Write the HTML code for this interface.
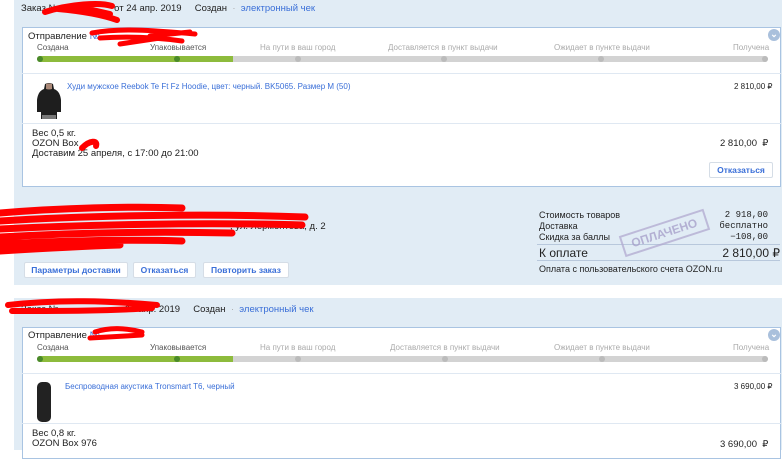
<html><head><style>
body{margin:0;width:782px;height:450px;overflow:hidden;background:#fff;font-family:"Liberation Sans",sans-serif;font-size:9px;color:#222;position:relative}
.a{position:absolute;white-space:nowrap}
.pan{position:absolute;left:14px;width:768px;background:#e1ecf5}
.box{position:absolute;left:22px;width:757px;background:#fff;border:1px solid #a9c4e2}
.lnk{color:#3a6fd8}
.g{color:#aaa}
.bar{position:absolute;height:6px;border-radius:3px;background:#d3d3d3}
.dot{position:absolute;width:6px;height:6px;border-radius:3px}
.sep{position:absolute;left:22px;width:759px;height:1px;background:#dfe8f2}
.btn{position:absolute;top:262px;height:14px;background:#fff;border:1px solid #d5dde6;border-radius:2px;color:#3a6fd8;font-weight:bold;font-size:8.5px;text-align:center;line-height:14px}
.chev{position:absolute;width:12px;height:12px;border-radius:6px;background:#a9c0dc;color:#fff;font-size:9px;text-align:center;line-height:10px;font-weight:bold}
</style></head><body>
<div class="pan" style="top:0;height:285px"></div>
<div class="pan" style="top:298px;height:152px"></div>

<!-- order 1 -->
<div class="a" style="left:21px;top:3px;font-size:9.5px">Заказ №&nbsp;&nbsp;&nbsp;&nbsp;&nbsp;&nbsp;&nbsp;&nbsp;&nbsp;&nbsp;&nbsp;&nbsp;&nbsp;&nbsp;&nbsp;&nbsp;&nbsp;&nbsp;&nbsp;&nbsp;&nbsp;от 24 апр. 2019 &nbsp;&nbsp;&nbsp;&nbsp;Создан &nbsp;<span class="g">·</span> &nbsp;<span class="lnk">электронный чек</span></div>
<div class="box" style="top:27px;height:158px"></div>
<div class="chev" style="left:768px;top:29px">⌄</div>
<div class="a" style="left:28px;top:31px;font-size:9.5px">Отправление <span class="lnk">№</span></div>
<div class="a" style="left:37px;top:43px;font-size:8px;color:#555">Создана</div>
<div class="a" style="left:150px;top:43px;font-size:8px;color:#555">Упаковывается</div>
<div class="a g" style="left:260px;top:43px;font-size:8px">На пути в ваш город</div>
<div class="a g" style="left:388px;top:43px;font-size:8px">Доставляется в пункт выдачи</div>
<div class="a g" style="left:554px;top:43px;font-size:8px">Ожидает в пункте выдачи</div>
<div class="a g" style="left:733px;top:43px;font-size:8px">Получена</div>
<div class="bar" style="left:37px;top:56px;width:731px"></div>
<div class="bar" style="left:37px;top:56px;width:196px;background:#8dbb3c;border-radius:3px 0 0 3px"></div>
<div class="dot" style="left:37px;top:56px;background:#4a8a2a"></div>
<div class="dot" style="left:174px;top:56px;background:#4a8a2a"></div>
<div class="dot" style="left:295px;top:56px;background:#bbb"></div>
<div class="dot" style="left:441px;top:56px;background:#bbb"></div>
<div class="dot" style="left:598px;top:56px;background:#bbb"></div>
<div class="dot" style="left:762px;top:56px;background:#bbb"></div>
<div class="sep" style="top:73px"></div>
<svg class="a" style="left:36px;top:82px" width="26" height="38"><path d="M9 2 Q13 0 17 2 L18 7 Q24 9 25 18 L25 30 L21 30 L21 37 L5 37 L5 30 L1 30 L1 18 Q2 9 8 7 Z" fill="#1e1e1e"/><path d="M10 2 Q13 1 16 2 L16 7 Q13 8 10 7Z" fill="#a87"/><rect x="6" y="33" width="14" height="4" fill="#777"/></svg>
<div class="a lnk" style="left:67px;top:82px;font-size:8px">Худи мужское Reebok Te Ft Fz Hoodie, цвет: черный. BK5065. Размер M (50)</div>
<div class="a" style="left:734px;top:82px;font-size:8px">2 810,00 ₽</div>
<div class="sep" style="top:123px"></div>
<div class="a" style="left:32px;top:129px;font-size:9.5px;line-height:10px">Вес 0,5 кг.<br>OZON Box<br>Доставим 25 апреля, с 17:00 до 21:00</div>
<div class="a" style="left:720px;top:138px;font-size:9.5px">2 810,00 &nbsp;₽</div>
<div class="btn" style="left:709px;top:162px;width:62px">Отказаться</div>

<div class="a" style="left:230px;top:221px;font-size:9.5px">, ул. Лермонтова, д. 2</div>
<div class="btn" style="left:24px;width:102px">Параметры доставки</div>
<div class="btn" style="left:133px;width:61px">Отказаться</div>
<div class="btn" style="left:203px;width:84px">Повторить заказ</div>

<div class="a" style="left:539px;top:210px;font-size:9px;line-height:11px">Стоимость товаров<br>Доставка<br>Скидка за баллы</div>
<div class="a" style="left:700px;top:210px;width:68px;text-align:right;font-size:9px;line-height:11px;font-family:'Liberation Mono',monospace">2 918,00<br>бесплатно<br>−108,00</div>
<div class="a" style="left:537px;top:244px;width:243px;height:1px;background:#b8c8dc"></div>
<div class="a" style="left:539px;top:246px;font-size:12px">К оплате</div>
<div class="a" style="left:700px;top:246px;width:80px;text-align:right;font-size:12px">2 810,00 ₽</div>
<div class="a" style="left:537px;top:260px;width:243px;height:1px;background:#b8c8dc"></div>
<div class="a" style="left:539px;top:264px;font-size:9px">Оплата с пользовательского счета OZON.ru</div>
<div class="a" style="left:620px;top:222px;border:2px solid #b2aad0;color:#a49cc8;font-size:12px;font-weight:bold;padding:2px 8px;transform:rotate(-18deg);opacity:.75">ОПЛАЧЕНО</div>

<!-- order 2 -->
<div class="a" style="left:21px;top:304px;font-size:9.5px">Заказ №&nbsp;&nbsp;&nbsp;&nbsp;&nbsp;&nbsp;&nbsp;&nbsp;&nbsp;&nbsp;&nbsp;&nbsp;&nbsp;&nbsp;&nbsp;&nbsp;&nbsp;&nbsp;&nbsp;&nbsp;&nbsp;&nbsp;&nbsp;&nbsp;&nbsp;24 апр. 2019 &nbsp;&nbsp;&nbsp;&nbsp;Создан &nbsp;<span class="g">·</span> &nbsp;<span class="lnk">электронный чек</span></div>
<div class="box" style="top:327px;height:130px"></div>
<div class="chev" style="left:768px;top:329px">⌄</div>
<div class="a" style="left:28px;top:330px;font-size:9.5px">Отправление <span class="lnk">№</span></div>
<div class="a" style="left:37px;top:343px;font-size:8px;color:#555">Создана</div>
<div class="a" style="left:150px;top:343px;font-size:8px;color:#555">Упаковывается</div>
<div class="a g" style="left:260px;top:343px;font-size:8px">На пути в ваш город</div>
<div class="a g" style="left:390px;top:343px;font-size:8px">Доставляется в пункт выдачи</div>
<div class="a g" style="left:554px;top:343px;font-size:8px">Ожидает в пункте выдачи</div>
<div class="a g" style="left:733px;top:343px;font-size:8px">Получена</div>
<div class="bar" style="left:37px;top:356px;width:731px"></div>
<div class="bar" style="left:37px;top:356px;width:196px;background:#8dbb3c;border-radius:3px 0 0 3px"></div>
<div class="dot" style="left:37px;top:356px;background:#4a8a2a"></div>
<div class="dot" style="left:174px;top:356px;background:#4a8a2a"></div>
<div class="dot" style="left:295px;top:356px;background:#bbb"></div>
<div class="dot" style="left:442px;top:356px;background:#bbb"></div>
<div class="dot" style="left:599px;top:356px;background:#bbb"></div>
<div class="dot" style="left:762px;top:356px;background:#bbb"></div>
<div class="sep" style="top:373px"></div>
<div class="a" style="left:37px;top:382px;width:14px;height:40px;background:#222;border-radius:5px"></div>
<div class="a lnk" style="left:65px;top:382px;font-size:8px">Беспроводная акустика Tronsmart T6, черный</div>
<div class="a" style="left:734px;top:382px;font-size:8px">3 690,00 ₽</div>
<div class="sep" style="top:423px"></div>
<div class="a" style="left:32px;top:429px;font-size:9.5px;line-height:10px">Вес 0,8 кг.<br>OZON Box 976</div>
<div class="a" style="left:720px;top:439px;font-size:9.5px">3 690,00 &nbsp;₽</div>

<svg class="a" style="left:0;top:0" width="782" height="450">
<g stroke="#f00" fill="none" stroke-linecap="round">
<path d="M45 12 C70 4 100 2 112 6 M58 9 C80 11 100 14 117 20 M75 6 L110 14" stroke-width="6"/>
<path d="M92 33 C120 28 150 30 195 34 M100 38 C130 36 160 38 182 41 M150 36 L190 32 M120 44 L160 38" stroke-width="5"/>
<path d="M82 148 C90 140 98 140 96 146" stroke-width="6"/>
<path d="M0 213 C60 208 130 206 182 208 M0 221 C80 216 200 213 305 217 M0 229 C80 225 200 222 302 225 M0 237 C70 233 150 231 232 233 M0 244 C60 241 120 239 182 241 M0 251 C50 248 90 246 120 245" stroke-width="7"/>
<path d="M8 305 C60 299 110 301 157 305 M12 311 C60 311 110 311 152 308" stroke-width="6"/>
<path d="M95 332 C110 327 125 328 142 332 M90 338 C110 337 125 336 142 335" stroke-width="5"/>
</g></svg>
</body></html>
